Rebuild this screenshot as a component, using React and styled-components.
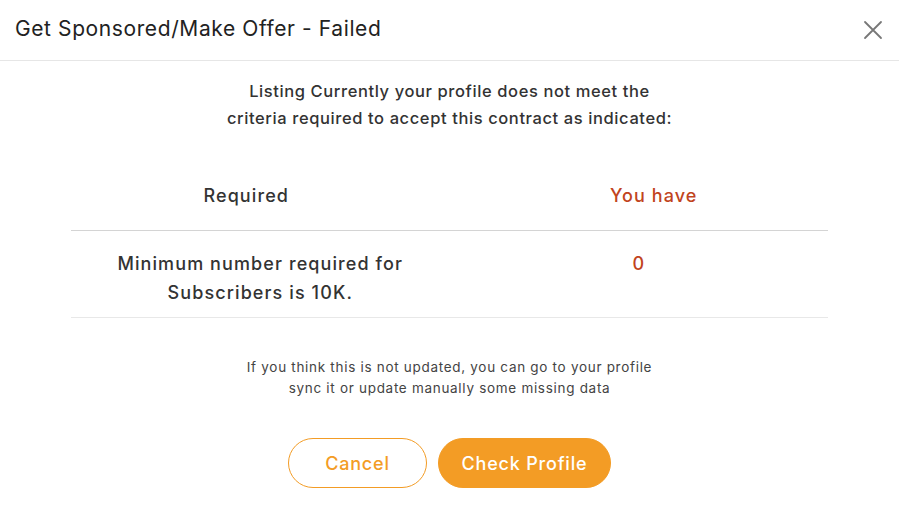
import React from "react";
import styled, { createGlobalStyle } from "styled-components";

const GlobalStyle = createGlobalStyle`
  body {
    margin: 0;
    background: #ffffff;
    font-family: "Inter", "Open Sans", sans-serif;
  }
`;

const Modal = styled.div`
  width: 899px;
  height: 522px;
  background: #ffffff;
  display: flex;
  flex-direction: column;
`;

const Header = styled.div`
  height: 61px;
  box-sizing: border-box;
  border-bottom: 1px solid #e6e6e6;
  display: flex;
  align-items: center;
  justify-content: space-between;
  padding: 0 14px 0 15px;
`;

const Title = styled.h1`
  margin: 0;
  margin-top: -3px;
  font-size: 21px;
  font-weight: 400;
  color: #222222;
  letter-spacing: 0.6px;
`;

const CloseButton = styled.button`
  border: none;
  background: none;
  padding: 0;
  width: 24px;
  height: 24px;
  display: flex;
  align-items: center;
  justify-content: center;
  cursor: pointer;
`;

const Body = styled.div`
  display: flex;
  flex-direction: column;
  align-items: center;
  padding-top: 17px;
`;

const Intro = styled.p`
  margin: 0;
  text-align: center;
  font-size: 16.5px;
  font-weight: 500;
  line-height: 27px;
  letter-spacing: 0.6px;
  color: #333333;
`;

const Table = styled.div`
  width: 757px;
  margin-top: 29px;
`;

const Row = styled.div`
  display: grid;
  grid-template-columns: 1fr 1fr;
  align-items: ${(p) => (p.head ? "center" : "start")};
  height: ${(p) => (p.head ? "70px" : "87px")};
  padding-top: ${(p) => (p.head ? "0" : "18px")};
  box-sizing: border-box;
  border-bottom: 1px solid ${(p) => (p.head ? "#d4d4d4" : "#e8e8e8")};
`;

const Cell = styled.div`
  text-align: center;
  font-size: 18px;
  font-weight: 500;
  line-height: 29px;
  letter-spacing: 1.1px;
  color: ${(p) => (p.accent ? "#c1441d" : "#333333")};
  padding-left: ${(p) => p.shiftRight || 0}px;
  padding-right: ${(p) => p.shiftLeft || 0}px;
`;

const Note = styled.p`
  margin: 39px 0 0;
  text-align: center;
  font-size: 13.5px;
  line-height: 21px;
  letter-spacing: 0.7px;
  color: #444444;
`;

const Actions = styled.div`
  display: flex;
  gap: 11px;
  margin-top: 39px;
`;

const Button = styled.button`
  height: 50px;
  box-sizing: border-box;
  border-radius: 25px;
  font-family: inherit;
  font-size: 18px;
  font-weight: 500;
  letter-spacing: 0.8px;
  cursor: pointer;
  border: 1px solid #f39c25;
  background: ${(p) => (p.primary ? "#f39c25" : "#ffffff")};
  color: ${(p) => (p.primary ? "#ffffff" : "#f39c25")};
  width: ${(p) => (p.primary ? "173px" : "139px")};
`;

const CloseIcon = () => (
  <svg width="20" height="20" viewBox="0 0 20 20">
    <path
      d="M2 2 L18 18 M18 2 L2 18"
      stroke="#777777"
      strokeWidth="1.8"
      strokeLinecap="round"
    />
  </svg>
);

export default function App() {
  return (
    <>
      <GlobalStyle />
      <Modal>
        <Header>
          <Title>Get Sponsored/Make Offer - Failed</Title>
          <CloseButton aria-label="Close">
            <CloseIcon />
          </CloseButton>
        </Header>
        <Body>
          <Intro>
            Listing Currently your profile does not meet the
            <br />
            criteria required to accept this contract as indicated:
          </Intro>
          <Table>
            <Row head>
              <Cell shiftLeft={28}>Required</Cell>
              <Cell accent shiftRight={30}>
                You have
              </Cell>
            </Row>
            <Row>
              <Cell>
                Minimum number required for
                <br />
                Subscribers is 10K.
              </Cell>
              <Cell accent>0</Cell>
            </Row>
          </Table>
          <Note>
            If you think this is not updated, you can go to your profile
            <br />
            sync it or update manually some missing data
          </Note>
          <Actions>
            <Button>Cancel</Button>
            <Button primary>Check Profile</Button>
          </Actions>
        </Body>
      </Modal>
    </>
  );
}
